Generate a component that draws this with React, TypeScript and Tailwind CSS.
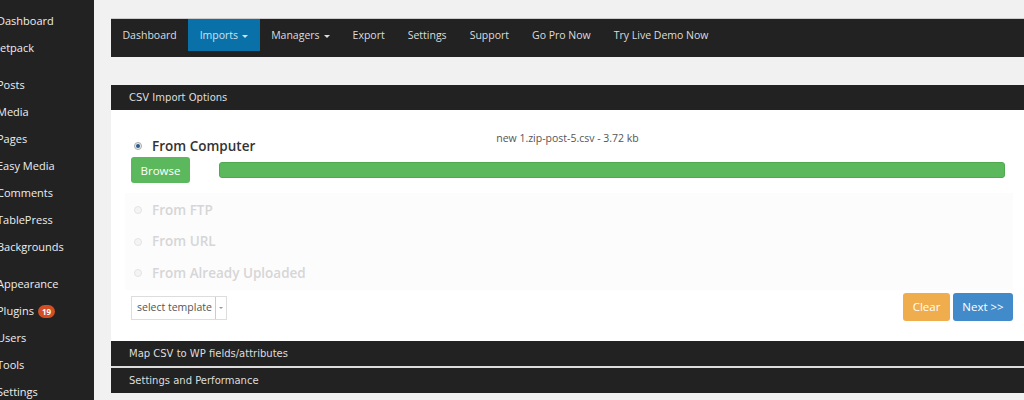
import React from "react";

const sideItems: { label: string; gap?: boolean; badge?: string }[] = [
  { label: "Dashboard" },
  { label: "Jetpack" },
  { label: "Posts", gap: true },
  { label: "Media" },
  { label: "Pages" },
  { label: "Easy Media" },
  { label: "Comments" },
  { label: "TablePress" },
  { label: "Backgrounds" },
  { label: "Appearance", gap: true },
  { label: "Plugins", badge: "19" },
  { label: "Users" },
  { label: "Tools" },
  { label: "Settings" },
];

const navItems = [
  { label: "Dashboard" },
  { label: "Imports", caret: true, active: true },
  { label: "Managers", caret: true },
  { label: "Export" },
  { label: "Settings" },
  { label: "Support" },
  { label: "Go Pro Now" },
  { label: "Try Live Demo Now" },
];

const Radio = ({ checked, faded }: { checked?: boolean; faded?: boolean }) => (
  <span
    className={`w-[8px] h-[8px] rounded-full border flex items-center justify-center ${
      faded ? "border-[#e4e4e4] bg-[#f4f4f4]" : "border-[#aaa] bg-[#e8eef4]"
    }`}
  >
    {checked && <span className="w-[4px] h-[4px] rounded-full bg-[#2a5a8a]" />}
  </span>
);

const SectionBar = ({ title }: { title: string }) => (
  <div
    className="h-[25px] bg-[#222] flex items-center pl-[18px] text-[10px] text-[#ddd]"
    style={{ fontFamily: "'DejaVu Sans', Verdana, sans-serif" }}
  >
    {title}
  </div>
);

export default function App() {
  return (
    <div
      className="w-[1024px] h-[400px] overflow-hidden flex bg-[#f1f1f1]"
      style={{ fontFamily: "'Open Sans', 'Noto Sans', sans-serif" }}
    >
      {/* WP admin sidebar */}
      <div className="w-[94px] shrink-0 bg-[#222] pt-[8px]">
        {sideItems.map((item) => (
          <div
            key={item.label}
            className={`h-[27px] flex items-center -ml-[3px] text-[11px] text-[#eee] whitespace-nowrap ${item.gap ? "mt-[10px]" : ""}`}
          >
            {item.label}
            {item.badge && (
              <span className="ml-[4px] h-[13px] min-w-[17px] px-[4px] rounded-full bg-[#d54e21] text-white text-[8px] font-bold flex items-center justify-center">
                {item.badge}
              </span>
            )}
          </div>
        ))}
      </div>

      {/* Main content */}
      <div className="flex-1 pl-[17px] pt-[18px]">
        {/* Top nav */}
        <div className="h-[39px] bg-[#222] border-t border-[#ccc] flex items-start text-[10.5px] text-[#ddd]">
          {navItems.map((n) => (
            <div
              key={n.label}
              className={`h-[32px] pt-[2px] px-[11.5px] flex items-center gap-[4px] ${
                n.active ? "bg-[#0a70a8] text-[#c8e4f5]" : ""
              }`}
            >
              {n.label}
              {n.caret && (
                <span className="w-0 h-0 border-l-[3px] border-r-[3px] border-t-[3px] border-l-transparent border-r-transparent border-t-current mt-[1px]" />
              )}
            </div>
          ))}
        </div>

        {/* CSV Import Options */}
        <div className="mt-[28px]">
          <SectionBar title="CSV Import Options" />
          <div className="bg-white h-[231px] pl-[20px] pr-[11px] pt-[21px] flex flex-col">
            <div className="-ml-[20px] -mr-[11px] text-center text-[10.5px] text-[#555] h-[16px]">
              new 1.zip-post-5.csv - 3.72 kb
            </div>
            <div className="flex items-center gap-[10px] pl-[3px] -mt-[11px]">
              <Radio checked />
              <span className="text-[13.5px] font-semibold text-[#333]">From Computer</span>
            </div>
            <div className="flex items-center mt-[1px] pr-[8px]">
              <button className="w-[59px] h-[26px] rounded-[3px] bg-[#5cb85c] text-white text-[11.5px]">
                Browse
              </button>
              <div className="flex-1 ml-[29px] h-[16px] rounded-[3px] bg-[#5cb85c] border border-[#4fa94f]" />
            </div>

            <div className="mt-[10px] -ml-[6px] pl-[6px] py-[1px] bg-[#fcfcfd] flex flex-col">
              {["From FTP", "From URL", "From Already Uploaded"].map((l) => (
                <div key={l} className="h-[31.5px] flex items-center gap-[10px] pl-[3px]">
                  <Radio faded />
                  <span className="text-[13.5px] font-semibold text-[#d6d6d6]">{l}</span>
                </div>
              ))}
            </div>

            <div className="flex items-end justify-between mt-[3px]">
              <div className="h-[24px] w-[96px] border border-[#ddd] flex items-center text-[10.5px] text-[#555] mb-[1px] whitespace-nowrap">
                <span className="pl-[5px] flex-1">select template</span>
                <span className="w-[11px] h-full border-l border-[#ccc] flex items-center justify-center">
                  <span className="w-0 h-0 border-l-[2px] border-r-[2px] border-t-[2px] border-l-transparent border-r-transparent border-t-[#999]" />
                </span>
              </div>
              <div className="flex gap-[3px]">
                <button className="w-[47px] h-[28px] rounded-[3px] bg-[#f0ad4e] text-white text-[11.5px]">
                  Clear
                </button>
                <button className="w-[60px] h-[28px] rounded-[3px] bg-[#428bca] text-white text-[11.5px]">
                  {"Next >>"}
                </button>
              </div>
            </div>
          </div>
          <SectionBar title="Map CSV to WP fields/attributes" />
          <div className="h-[2px] bg-[#ddd]" />
          <SectionBar title="Settings and Performance" />
        </div>
      </div>
    </div>
  );
}
